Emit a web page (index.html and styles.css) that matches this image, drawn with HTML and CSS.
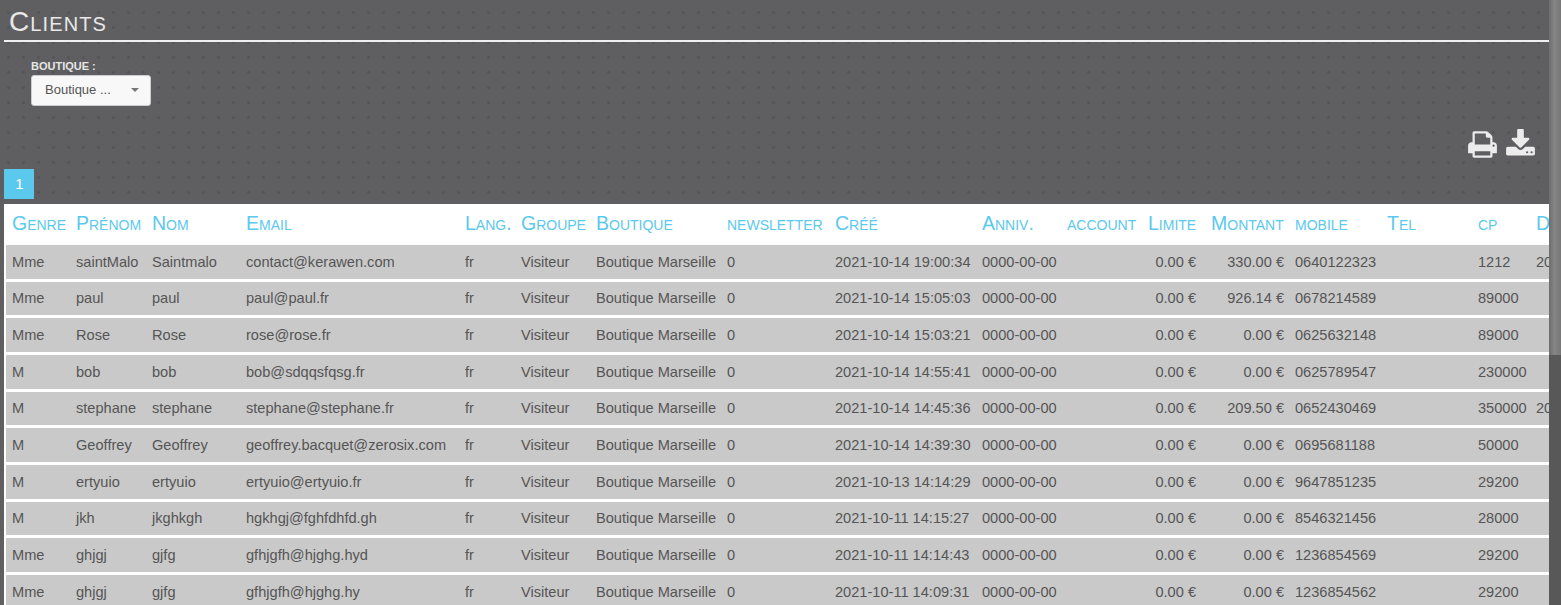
FILE: index.html
```html
<!DOCTYPE html>
<html lang="fr">
<head>
<meta charset="utf-8">
<title>Clients</title>
<link rel="stylesheet" href="styles.css">
</head>
<body>
<div class="app">
  <main class="main">
    <h1 class="title">Clients</h1>
    <div class="filters">
      <label class="filter-label">Boutique :</label>
      <div class="select"><span class="select-text">Boutique ...</span><span class="caret"></span></div>
    </div>
    <div class="tools">
      <svg class="tool" viewBox="0 0 1792 1792"><path d="M448 1536h896v-256h-896v256zm0-640h896v-384h-160q-40 0-68-28t-28-68v-160h-640v640zm1152 64q0-26-19-45t-45-19-45 19-19 45 19 45 45 19 45-19 19-45zm128 0v416q0 13-9.5 22.5t-22.5 9.5h-224v160q0 40-28 68t-68 28h-960q-40 0-68-28t-28-68v-160h-224q-13 0-22.5-9.5t-9.5-22.5v-416q0-79 56.5-135.5t135.5-56.5h64v-544q0-40 28-68t68-28h672q40 0 88 20t76 48l152 152q28 28 48 76t20 88v256h64q79 0 135.5 56.5t56.5 135.5z"/></svg>
      <svg class="tool" viewBox="0 0 1792 1792"><path d="M1344 1344q0-26-19-45t-45-19-45 19-19 45 19 45 45 19 45-19 19-45zm256 0q0-26-19-45t-45-19-45 19-19 45 19 45 45 19 45-19 19-45zm128-224v320q0 40-28 68t-68 28h-1472q-40 0-68-28t-28-68v-320q0-40 28-68t68-28h465l135 136q58 56 136 56t136-56l136-136h464q40 0 68 28t28 68zm-325-569q17 41-14 70l-448 448q-18 19-45 19t-45-19l-448-448q-31-29-14-70 17-39 59-39h256v-448q0-26 19-45t45-19h256q26 0 45 19t19 45v448h256q42 0 59 39z"/></svg>
    </div>
    <div class="pager"><span class="page">1</span></div>
    <div class="table-wrap">
      <table class="clients">
        <colgroup>
          <col class="c-genre"><col class="c-prenom"><col class="c-nom"><col class="c-email"><col class="c-lang"><col class="c-groupe"><col class="c-boutique"><col class="c-news"><col class="c-cree"><col class="c-anniv"><col class="c-account"><col class="c-limite"><col class="c-montant"><col class="c-mobile"><col class="c-tel"><col class="c-cp"><col class="c-der">
        </colgroup>
        <thead>
          <tr><th>Genre</th><th>Prénom</th><th>Nom</th><th>Email</th><th>Lang.</th><th>Groupe</th><th>Boutique</th><th class="sm">newsletter</th><th>Créé</th><th>Anniv.</th><th class="sm">account</th><th>Limite</th><th>Montant</th><th class="sm">mobile</th><th>Tel</th><th class="sm">cp</th><th>Dernière</th></tr>
        </thead>
        <tbody>
          <tr><td>Mme</td><td>saintMalo</td><td>Saintmalo</td><td>contact@kerawen.com</td><td>fr</td><td>Visiteur</td><td>Boutique Marseille</td><td>0</td><td>2021-10-14 19:00:34</td><td>0000-00-00</td><td></td><td class="num">0.00 €</td><td class="num">330.00 €</td><td>0640122323</td><td></td><td>1212</td><td>2021-10-14</td></tr>
          <tr><td>Mme</td><td>paul</td><td>paul</td><td>paul@paul.fr</td><td>fr</td><td>Visiteur</td><td>Boutique Marseille</td><td>0</td><td>2021-10-14 15:05:03</td><td>0000-00-00</td><td></td><td class="num">0.00 €</td><td class="num">926.14 €</td><td>0678214589</td><td></td><td>89000</td><td></td></tr>
          <tr><td>Mme</td><td>Rose</td><td>Rose</td><td>rose@rose.fr</td><td>fr</td><td>Visiteur</td><td>Boutique Marseille</td><td>0</td><td>2021-10-14 15:03:21</td><td>0000-00-00</td><td></td><td class="num">0.00 €</td><td class="num">0.00 €</td><td>0625632148</td><td></td><td>89000</td><td></td></tr>
          <tr><td>M</td><td>bob</td><td>bob</td><td>bob@sdqqsfqsg.fr</td><td>fr</td><td>Visiteur</td><td>Boutique Marseille</td><td>0</td><td>2021-10-14 14:55:41</td><td>0000-00-00</td><td></td><td class="num">0.00 €</td><td class="num">0.00 €</td><td>0625789547</td><td></td><td>230000</td><td></td></tr>
          <tr><td>M</td><td>stephane</td><td>stephane</td><td>stephane@stephane.fr</td><td>fr</td><td>Visiteur</td><td>Boutique Marseille</td><td>0</td><td>2021-10-14 14:45:36</td><td>0000-00-00</td><td></td><td class="num">0.00 €</td><td class="num">209.50 €</td><td>0652430469</td><td></td><td>350000</td><td>2021-10-14</td></tr>
          <tr><td>M</td><td>Geoffrey</td><td>Geoffrey</td><td>geoffrey.bacquet@zerosix.com</td><td>fr</td><td>Visiteur</td><td>Boutique Marseille</td><td>0</td><td>2021-10-14 14:39:30</td><td>0000-00-00</td><td></td><td class="num">0.00 €</td><td class="num">0.00 €</td><td>0695681188</td><td></td><td>50000</td><td></td></tr>
          <tr><td>M</td><td>ertyuio</td><td>ertyuio</td><td>ertyuio@ertyuio.fr</td><td>fr</td><td>Visiteur</td><td>Boutique Marseille</td><td>0</td><td>2021-10-13 14:14:29</td><td>0000-00-00</td><td></td><td class="num">0.00 €</td><td class="num">0.00 €</td><td>9647851235</td><td></td><td>29200</td><td></td></tr>
          <tr><td>M</td><td>jkh</td><td>jkghkgh</td><td>hgkhgj@fghfdhfd.gh</td><td>fr</td><td>Visiteur</td><td>Boutique Marseille</td><td>0</td><td>2021-10-11 14:15:27</td><td>0000-00-00</td><td></td><td class="num">0.00 €</td><td class="num">0.00 €</td><td>8546321456</td><td></td><td>28000</td><td></td></tr>
          <tr><td>Mme</td><td>ghjgj</td><td>gjfg</td><td>gfhjgfh@hjghg.hyd</td><td>fr</td><td>Visiteur</td><td>Boutique Marseille</td><td>0</td><td>2021-10-11 14:14:43</td><td>0000-00-00</td><td></td><td class="num">0.00 €</td><td class="num">0.00 €</td><td>1236854569</td><td></td><td>29200</td><td></td></tr>
          <tr><td>Mme</td><td>ghjgj</td><td>gjfg</td><td>gfhjgfh@hjghg.hy</td><td>fr</td><td>Visiteur</td><td>Boutique Marseille</td><td>0</td><td>2021-10-11 14:09:31</td><td>0000-00-00</td><td></td><td class="num">0.00 €</td><td class="num">0.00 €</td><td>1236854562</td><td></td><td>29200</td><td></td></tr>
        </tbody>
      </table>
    </div>
  </main>
  <div class="scrollbar"><div class="thumb"></div></div>
</div>
</body>
</html>
```

FILE: styles.css
```css
* { box-sizing: border-box; }
html, body { margin: 0; height: 100%; overflow: hidden; }
body { font-family: "Liberation Sans", Arial, sans-serif; font-size: 14.6px; color: #555; background: #5f5f61; }

.app { display: flex; height: 605px; }
.main {
  flex: 1;
  min-width: 0;
  overflow: hidden;
  background-color: #5f5f61;
  background-image: radial-gradient(circle at 1.5px 1.5px, #565658 1.3px, transparent 1.6px);
  background-size: 15px 15px;
  background-position: 7px 11px;
}

.title {
  margin: 0 0 0 4px;
  height: 42px;
  padding: 5px 0 0 5px;
  border-bottom: 2px solid #f0f0f0;
  font-size: 28px;
  letter-spacing: 1.1px;
  line-height: 33px;
  font-weight: 400;
  font-variant: small-caps;
  color: #e8e8e8;
}

.filters { padding: 18px 0 0 31px; height: 64px; }
.filter-label {
  display: block;
  font-size: 11px;
  line-height: 13px;
  font-weight: 700;
  text-transform: uppercase;
  color: #e6e6e6;
  margin-bottom: 2px;
}
.select {
  display: flex;
  align-items: center;
  justify-content: space-between;
  width: 120px;
  height: 31px;
  padding: 0 11px 2px 13px;
  background: #f8f8f8;
  border: 1px solid #ccc;
  border-radius: 3px;
  font-size: 13px;
  color: #555;
}
.caret { width: 0; height: 0; border-left: 4px solid transparent; border-right: 4px solid transparent; border-top: 4px solid #777; }

.tools { display: flex; justify-content: flex-end; gap: 7px; height: 31px; padding-right: 13px; margin-top: 23px; }
.tool { width: 31px; height: 31px; fill: #ececec; flex: none; }

.pager { padding: 0 0 0 4px; margin-top: 9px; height: 35px; }
.page {
  display: block;
  width: 30px;
  height: 30px;
  padding-left: 1px;
  background: #5bc8ee;
  color: #fff;
  text-align: center;
  line-height: 30px;
  font-size: 15px;
}

.table-wrap { margin-left: 4px; background: #fff; overflow: hidden; }
.clients { table-layout: fixed; width: 1633px; border-collapse: separate; border-spacing: 0; }

.c-genre { width: 66px; }
.c-prenom { width: 76px; }
.c-nom { width: 94px; }
.c-email { width: 219px; }
.c-lang { width: 56px; }
.c-groupe { width: 75px; }
.c-boutique { width: 131px; }
.c-news { width: 108px; }
.c-cree { width: 147px; }
.c-anniv { width: 85px; }
.c-account { width: 81px; }
.c-limite { width: 63px; }
.c-montant { width: 84px; }
.c-mobile { width: 92px; }
.c-tel { width: 91px; }
.c-cp { width: 58px; }
.c-der { width: 107px; }

.clients th {
  height: 41px;
  padding: 0 0 2px 6px;
  text-align: left;
  font-weight: 400;
  font-size: 19.5px;
  font-variant: small-caps;
  color: #5bc8ee;
  white-space: nowrap;
  overflow: hidden;
}
.clients th.sm { font-size: 20.4px; }
.clients th:first-child { padding-left: 8px; }
.clients td {
  height: 36.67px;
  padding: 0 0 3px 6px;
  background: linear-gradient(#c9c9c9, #c9c9c9) no-repeat 0 0 / 100% calc(100% - 3px);
  white-space: nowrap;
  overflow: hidden;
}
.clients td:first-child { padding-left: 8px; background-position: 2px 0; }
.clients td.num { text-align: right; padding-right: 5px; }
.clients td.num:nth-child(12) { padding-right: 9px; }

.scrollbar { flex: none; width: 12px; height: 605px; background: #585859; }
.thumb { height: 355px; background: linear-gradient(90deg, #6d6d6e, #858586 45%, #777778); }
```
